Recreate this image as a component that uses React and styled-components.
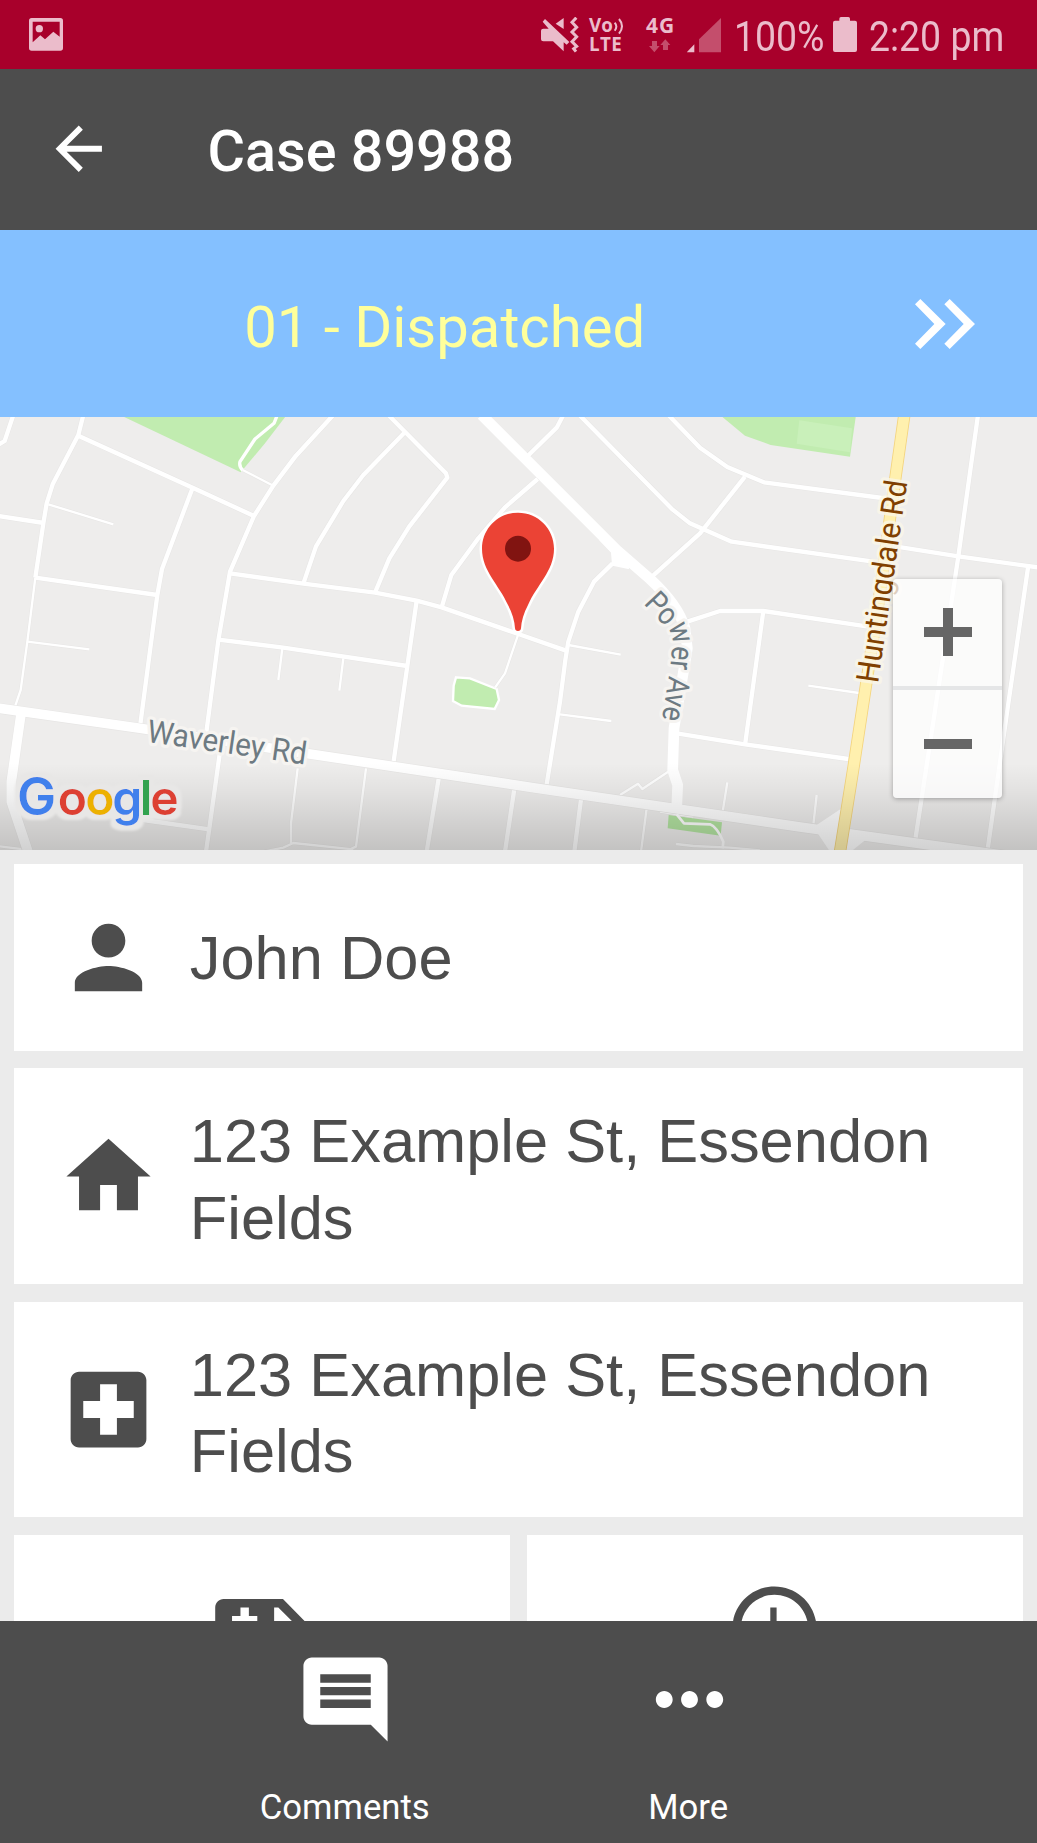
import React from "react";
import styled, { createGlobalStyle } from "styled-components";

const GlobalStyle = createGlobalStyle`
  * { box-sizing: border-box; }
  body { margin: 0; background: #ebebeb; font-family: Roboto, sans-serif; }
`;

const DARK = "#4d4d4d";
const TINT = "#ebbccb";

const Screen = styled.div`
  width: 1037px;
  height: 1843px;
  display: flex;
  flex-direction: column;
  overflow: hidden;
  background: #ebebeb;
`;

/* ---------- status bar ---------- */

const StatusBar = styled.div`
  flex: none;
  height: 69px;
  display: flex;
  align-items: flex-start;
  padding: 0 34px 0 29px;
  background: #a8002b;
  color: ${TINT};
`;

const StatusGlyph = styled.svg`
  flex: none;
  display: block;
  width: ${(p) => p.$w}px;
  height: ${(p) => p.$h}px;
  margin: ${(p) => p.$top}px 0 0 ${(p) => p.$left || 0}px;
`;

const StatusEnd = styled.div`
  display: flex;
  align-items: flex-start;
  margin-left: auto;
`;

const StatusText = styled.div`
  width: ${(p) => p.$w}px;
  margin-left: ${(p) => p.$left}px;
  margin-top: 6px;
  font-size: 43px;
  line-height: 60px;
  white-space: nowrap;
  span {
    display: inline-block;
    transform: scaleX(0.87);
    transform-origin: left center;
  }
`;

const NetBadge = styled.div`
  display: flex;
  flex-direction: column;
  width: ${(p) => p.$w}px;
  margin-left: ${(p) => p.$left}px;
  padding-top: 16px;
  font-family: "Open Sans", sans-serif;
  font-weight: 700;
  font-size: ${(p) => p.$size}px;
  line-height: 19.4px;
  letter-spacing: ${(p) => p.$track || 0}px;
  white-space: nowrap;
`;

const VoLine = styled.div`
  display: flex;
  align-items: flex-start;
  letter-spacing: 0;
`;

/* ---------- header ---------- */

const Header = styled.header`
  flex: none;
  height: 161px;
  display: flex;
  align-items: center;
  padding: 0 0 2px 44px;
  background: ${DARK};
  color: #fff;
`;

const Title = styled.h1`
  margin: 0 0 0 94px;
  padding-top: 7px;
  font-size: 57.5px;
  line-height: 68px;
  font-weight: 500;
`;

const StageBar = styled.div`
  flex: none;
  height: 187px;
  display: flex;
  align-items: center;
  padding-right: 62.2px;
  background: #84c0ff;
`;

const StageName = styled.div`
  flex: 1;
  padding: 6.5px 0 0 0;
  margin-right: 25.5px;
  text-align: center;
  color: #ffff9b;
  font-size: 58px;
  line-height: 68px;
`;

/* ---------- map ---------- */

const MapPanel = styled.section`
  flex: none;
  position: relative;
  height: 432.5px;
  overflow: hidden;
  background: #eeedec;
`;

const MapCanvas = styled.svg`
  display: block;
  width: 1037px;
  height: 433px;
`;

const ZoomControl = styled.div`
  position: absolute;
  right: 34.7px;
  top: 161.6px;
  width: 109.3px;
  height: 219.3px;
  display: flex;
  flex-direction: column;
  border-radius: 4px;
  background: rgba(255, 255, 255, 0.75);
  box-shadow: 0 1px 5px rgba(0, 0, 0, 0.3);
`;

const ZoomButton = styled.button`
  flex: 1;
  display: flex;
  align-items: center;
  justify-content: center;
  border: 0;
  padding: 0;
  background: none;
  & + & { border-top: 4px solid #e5e6e7; }
`;

/* ---------- detail cards ---------- */

const Details = styled.main`
  flex: 1;
  min-height: 0;
  overflow: hidden;
  display: flex;
  flex-direction: column;
  gap: 17.4px;
  padding: 14.5px 14.4px 0;
`;

const Card = styled.div`
  flex: none;
  height: ${(p) => p.$h}px;
  display: flex;
  align-items: center;
  padding: 0 40px 0 43.5px;
  background: #fff;
  color: ${DARK};
`;

const CardText = styled.div`
  margin-left: 30.9px;
  padding-top: ${(p) => (p.$multi ? 7.8 : 1.4)}px;
  font-family: "Liberation Sans", Arial, sans-serif;
  font-size: 61.4px;
  line-height: 76.7px;
`;

const TileRow = styled.div`
  flex: none;
  display: grid;
  grid-template-columns: 1fr 1fr;
  gap: 17px;
`;

const Tile = styled.div`
  height: 187px;
  display: flex;
  justify-content: center;
  padding: 43.4px 1.5px 0 0;
  background: #fff;
  color: ${DARK};
`;

/* ---------- bottom navigation ---------- */

const BottomNav = styled.nav`
  flex: none;
  height: 222.5px;
  display: flex;
  padding-left: 173px;
  background: ${DARK};
`;

const NavButton = styled.button`
  width: 343.5px;
  display: flex;
  flex-direction: column;
  align-items: center;
  border: 0;
  padding: 28px 0 0;
  background: none;
  color: #fff;
  font-family: Roboto, sans-serif;
  font-size: 34.7px;
  line-height: 40px;
  svg { margin-left: 2px; }
`;

const NavLabel = styled.span`
  margin-top: 37.6px;
`;

const IconSvg = styled.svg`
  flex: none;
  display: block;
  width: ${(p) => p.$size}px;
  height: ${(p) => p.$size}px;
  fill: currentColor;
`;

const Icon = ({ d, size = 101 }) => (
  <IconSvg viewBox="0 0 24 24" $size={size} aria-hidden="true">
    <path fillRule="evenodd" d={d} />
  </IconSvg>
);

const PATHS = {
  back: "M20 11H7.83l5.59-5.59L12 4l-8 8 8 8 1.41-1.41L7.83 13H20v-2z",
  person:
    "M12 12c2.21 0 4-1.79 4-4s-1.79-4-4-4-4 1.79-4 4 1.79 4 4 4zm0 2c-2.67 0-8 1.34-8 4v2h16v-2c0-2.66-5.33-4-8-4z",
  home: "M10 20v-6h4v6h5v-8h3L12 3 2 12h3v8z",
  hospital:
    "M19 3H5c-1.1 0-1.99.9-1.99 2L3 19c0 1.1.9 2 2 2h14c1.1 0 2-.9 2-2V5c0-1.1-.9-2-2-2zm-1 11h-4v4h-4v-4H6v-4h4V6h4v4h4v4z",
  ambulance:
    "M3 5H17.1L23 11V17H1V7C1 5.9 1.9 5 3 5zM7 7v2h-2v2h2v2h2v-2h2V9h-2V7zM15 7v4h5l-4-4z",
  clock:
    "M11.99 2C6.47 2 2 6.48 2 12s4.47 10 9.99 10C17.52 22 22 17.52 22 12S17.52 2 11.99 2zM12 20c-4.42 0-8-3.58-8-8s3.58-8 8-8 8 3.58 8 8-3.58 8-8 8zM12.5 7H11v6l5.25 3.15.75-1.23-4.5-2.67z",
  comment:
    "M21.99 4c0-1.1-.89-2-1.99-2H4c-1.1 0-2 .9-2 2v12c0 1.1.9 2 2 2h14l4 4-.01-18zM18 14H6v-2h12v2zm0-3H6V9h12v2zm0-3H6V6h12v2z",
  more: "M6 10c-1.1 0-2 .9-2 2s.9 2 2 2 2-.9 2-2-.9-2-2-2zm12 0c-1.1 0-2 .9-2 2s.9 2 2 2 2-.9 2-2-.9-2-2-2zm-6 0c-1.1 0-2 .9-2 2s.9 2 2 2 2-.9 2-2-.9-2-2-2z",
};

/* Street centre lines, grouped by stroke width in map units. */
const STREETS = [
  [13, [
    "M40 0L14 78L-10 92",
    "M250 0L235 60L158 208L140 265L130 325L106 488",
    "M235 62L578 218L762 303",
    "M1000 0L888 122L820 212L762 303L690 470L655 676L618 960",
    "M578 218L486 462L472 540L420 935",
    "M-10 302L132 324",
    "M106 488L472 540",
    "M690 475L910 506L1125 533L1250 557L1325 577L1555 657L1698 707",
    "M655 674L850 698L1222 753",
    "M1216 50L1090 180L1030 258L948 394L910 506",
    "M1165 0L1338 175L1342 188L1228 334L1168 430L1125 533",
    "M1250 557L1222 753L1180 1045",
    "M1613 192L1515 277L1435 370L1354 480L1325 577",
    "M1690 0L1670 38L1580 126",
    "M1738 0L2018 284L2070 325L2195 380L2620 440",
    "M2005 0L2100 98L2182 156L2292 202L2670 252",
    "M1950 490L2100 355L2235 185",
    "M1838 445L1782 500L1735 590L1705 680L1696 735L1680 860L1640 1108",
    "M2055 622L2160 588L2290 588L2600 634",
    "M2290 588L2235 990",
    "M2035 956L2235 988L2545 1032",
    "M2690 395L2875 424L3120 458",
    "M2934 0L2875 424L2800 920L2745 1280",
    "M3084 458L3020 900L2962 1310",
    "M660 1010L628 1240L618 1310",
    "M430 1215L628 1243",
    "M1317 1085L1280 1310",
    "M1544 1115L1515 1310",
    "M1744 1145L1723 1310",
  ]],
  [7, [
    "M145 268L340 328",
    "M106 488L82 680L62 825L45 875",
    "M82 680L268 703",
    "M847 700L835 795",
    "M1030 730L1018 827",
    "M728 165L820 212",
    "M893 1060L873 1225L873 1285",
    "M790 1310L850 1298L880 1284L1060 1303",
    "M1098 1060L1068 1295L1050 1303",
    "M1555 657L1515 775L1485 818",
    "M1705 690L1862 719",
    "M1680 898L1834 918",
    "M1860 1140L1914 1106L1927 1122L2008 1068",
    "M1940 1180L1923 1310",
    "M1980 1190L2080 1205",
    "M2425 812L2577 834",
    "M2182 1102L2168 1190",
    "M2450 1140L2440 1230",
    "M2028 1287L2080 1293L2190 1298L2280 1306",
    "M-10 1293L80 1304",
  ]],
];

const GOOGLE = [
  ["G", 51, "#4080ec", 157],
  ["o", 173, "#dd4033", 144],
  ["o", 256, "#ecb100", 144],
  ["g", 337, "#4080ec", 144],
  ["l", 419, "#33a350", 144],
  ["e", 451, "#dd4033", 144],
];

const StreetMap = () => (
  <MapCanvas viewBox="0 6 3111 1299">
    <defs>
      <linearGradient id="shade" x1="0" y1="0" x2="0" y2="1">
        <stop offset="0" stopColor="#000" stopOpacity="0" />
        <stop offset="0.3" stopColor="#000" stopOpacity="0.045" />
        <stop offset="1" stopColor="#000" stopOpacity="0.18" />
      </linearGradient>
      <filter id="halo" x="-10%" y="-20%" width="120%" height="140%">
        <feMorphology in="SourceAlpha" operator="dilate" radius="14" result="grown" />
        <feGaussianBlur in="grown" stdDeviation="3" result="soft" />
        <feFlood floodColor="#e8e7e6" />
        <feComposite in2="soft" operator="in" result="edge" />
        <feMerge>
          <feMergeNode in="edge" />
          <feMergeNode in="SourceGraphic" />
        </feMerge>
      </filter>
      <path id="powerAve" d="M1930 566L2005 645Q2019 660 2017 692L2012 750L1978 960" />
    </defs>

    <g fill="#c1ecb0">
      <path d="M360 0H860L795 85L722 172Z" />
      <path d="M2160 0H2568L2550 125L2312 90L2235 62Z" />
      <path d="M1368 787L1410 790L1490 822L1497 855L1484 882L1385 872L1359 858L1361 812Z" stroke="#fff" strokeWidth="7" />
      <path d="M2006 1200L2166 1222L2162 1262L2003 1240Z" fill="#b3e3a1" />
    </g>
    <path d="M2398 16L2556 40L2550 112L2390 86Z" fill="#c9f0ba" />

    <g fill="none" strokeLinejoin="round">
      <path d="M832 0L822 25L765 72L720 140Q716 155 730 167" stroke="#fff" strokeWidth="10" />
      {STREETS.map(([w, lines]) =>
        lines.map((d) => <path key={`c${d}`} d={d} stroke="#e7e6e5" strokeWidth={w + 3} />)
      )}
      {STREETS.map(([w, lines]) =>
        lines.map((d) => <path key={d} d={d} stroke="#fff" strokeWidth={w} />)
      )}
      <g stroke="#e7e6e5">
        <path d="M-10 879L420 940L1050 1035L1600 1118L2400 1236L3120 1336" strokeWidth="33" />
        <path d="M64 890L34 1100L34 1160L84 1310" strokeWidth="32" />
      </g>
      <g stroke="#fff">
        <path d="M-10 879L420 940L1050 1035L1600 1118L2400 1236L3120 1336" strokeWidth="29" />
        <path d="M64 890L34 1100L34 1160L84 1310" strokeWidth="29" />
        <path d="M1445 0L1580 135L1850 405L1950 492Q2035 570 2055 640L2062 700L2022 940L2018 1065L2033 1110L2030 1180" strokeWidth="32" />
        <path d="M1800 375L1835 412L1838 450L1885 460L1880 425Z" fill="#fff" strokeWidth="4" />
        <path d="M2030 1198L2052 1225L2130 1228Q2150 1235 2170 1280L2168 1300" strokeWidth="8" />
      </g>
      <path d="M2450 1230L2525 1180L2550 1245L2600 1272L2540 1320L2490 1310L2455 1258Z" fill="#fff" />
      <path d="M2713 0L2686 190L2636 560L2560 1060L2520 1310" stroke="#f4d47d" strokeWidth="37" />
      <path d="M2713 0L2686 190L2636 560L2560 1060L2520 1310" stroke="#fff0ae" strokeWidth="32" />
    </g>

    <g
      fontFamily="Roboto, sans-serif"
      fontSize="95"
      stroke="#f6f4f1"
      strokeWidth="20"
      strokeLinejoin="round"
      paintOrder="stroke"
    >
      <text transform="translate(438 980) rotate(8.2)" textLength="482" lengthAdjust="spacingAndGlyphs" fill="#6d7a82">
        Waverley Rd
      </text>
      <text fill="#6d7a82" fontSize="93">
        <textPath href="#powerAve" textLength="382" lengthAdjust="spacingAndGlyphs">Power Ave</textPath>
      </text>
      <text
        transform="translate(2634 806) rotate(-81.7)"
        textLength="612"
        lengthAdjust="spacingAndGlyphs"
        fill="#804000"
        stroke="#fbf7e8"
        strokeOpacity="0.75"
      >
        Huntingdale Rd
      </text>
    </g>

    <path
      d="M1554 293C1494 293 1446 341 1446 401C1446 468 1498 510 1524 570Q1543 606 1545 640Q1546 648 1554 648Q1562 648 1563 640Q1565 606 1584 570C1610 510 1662 468 1662 401C1662 341 1614 293 1554 293Z"
      fill="#eb4335"
      stroke="#fff"
      strokeWidth="15"
      paintOrder="stroke"
    />
    <circle cx="1554" cy="401" r="39" fill="#811411" />

    <rect x="0" y="1045" width="3111" height="260" fill="url(#shade)" />

    <g fontFamily="Inter, sans-serif" fontWeight="600" filter="url(#halo)">
      <text y="1200">
        {GOOGLE.map(([ch, x, fill, size]) => (
          <tspan key={x} x={x} fill={fill} fontSize={size}>{ch}</tspan>
        ))}
      </text>
    </g>
  </MapCanvas>
);

export default function App() {
  return (
    <>
      <GlobalStyle />
      <Screen>
        <StatusBar>
          <StatusGlyph $w={34} $h={33} $top={18} viewBox="0 0 102 99">
            <path
              fill={TINT}
              fillRule="evenodd"
              d="M8 0H94Q102 0 102 8V90Q102 98 94 98H8Q0 98 0 90V8Q0 0 8 0ZM11 11V73L34 52L48 64L73 41L92 56V11Z"
            />
            <circle cx="31" cy="32" r="11" fill={TINT} />
          </StatusGlyph>
          <StatusEnd>
            <StatusGlyph $w={39} $h={37} $top={17} viewBox="66 51 117 111">
              <path fill={TINT} d="M69 92Q69 86 76 86H92L74 65L81 57L154 126L146 134L137 127V154L105 124H76Q69 124 69 118ZM137 54V87L113 71Z" />
              <path d="M175 53L162 67L176 82L162 96L176 110L162 125L176 139L167 146L174 155" fill="none" stroke={TINT} strokeWidth="9" />
            </StatusGlyph>
            <NetBadge $left={10} $w={37.5} $size={18.8} $track={0.4}>
              <VoLine>
                Vo
                <StatusGlyph $w={11} $h={17} $top={2} $left={1} viewBox="0 0 33 51">
                  <path d="M2 14Q12 25 2 38M15 3Q33 24 15 47" fill="none" stroke={TINT} strokeWidth="6" />
                </StatusGlyph>
              </VoLine>
              LTE
            </NetBadge>
            <NetBadge $left={19.5} $w={28} $size={21} $track={1}>
              4G
              <StatusGlyph $w={22} $h={14} $top={4} $left={3} viewBox="394 117 66 42">
                <path fill="#c44e6c" d="M403 123H418V138H426L410 157L394 138H403ZM436 150V135H428L443 118L458 135H451V150Z" />
              </StatusGlyph>
            </NetBadge>
            <StatusGlyph $w={35} $h={35} $top={18} $left={13} viewBox="510 54 105 105">
              <path fill={TINT} d="M509 157L532 133V157Z" />
              <path fill="#c44e6c" d="M546 157V118L612 54V157Z" />
            </StatusGlyph>
            <StatusText $w={92} $left={12}><span>100%</span></StatusText>
            <StatusGlyph $w={24} $h={35} $top={17} $left={7} viewBox="948 51 72 105">
              <path fill={TINT} d="M967 56Q967 51 972 51H994Q999 51 999 56V62H1014Q1020 62 1020 68V150Q1020 156 1014 156H954Q948 156 948 150V68Q948 62 954 62H967Z" />
            </StatusGlyph>
            <StatusText $w={134} $left={12}><span>2:20 pm</span></StatusText>
          </StatusEnd>
        </StatusBar>

        <Header>
          <Icon d={PATHS.back} size={69.5} />
          <Title>Case 89988</Title>
        </Header>

        <StageBar>
          <StageName>01 - Dispatched</StageName>
          <svg width="60" height="50" viewBox="1192 897 180 150">
            <path
              fill="#fff"
              d="M1208 897L1192 913L1250 972L1192 1031L1208 1047L1284 972ZM1296 897L1280 913L1338 972L1280 1031L1296 1047L1372 972Z"
            />
          </svg>
        </StageBar>

        <MapPanel>
          <StreetMap />
          <ZoomControl>
            <ZoomButton aria-label="Zoom in">
              <svg width="48" height="48" viewBox="0 0 48 48">
                <path d="M19 0H29V19H48V29H29V48H19V29H0V19H19Z" fill="#666" />
              </svg>
            </ZoomButton>
            <ZoomButton aria-label="Zoom out">
              <svg width="48" height="10" viewBox="0 0 48 10">
                <path d="M0 0H48V10H0Z" fill="#666" />
              </svg>
            </ZoomButton>
          </ZoomControl>
        </MapPanel>

        <Details>
          <Card $h={187}>
            <Icon d={PATHS.person} />
            <CardText>John Doe</CardText>
          </Card>
          <Card $h={215.8}>
            <Icon d={PATHS.home} />
            <CardText $multi>123 Example St, Essendon Fields</CardText>
          </Card>
          <Card $h={215.8}>
            <Icon d={PATHS.hospital} />
            <CardText $multi>123 Example St, Essendon Fields</CardText>
          </Card>
          <TileRow>
            <Tile><Icon d={PATHS.ambulance} /></Tile>
            <Tile><Icon d={PATHS.clock} /></Tile>
          </TileRow>
        </Details>

        <BottomNav>
          <NavButton>
            <Icon d={PATHS.comment} />
            <NavLabel>Comments</NavLabel>
          </NavButton>
          <NavButton>
            <Icon d={PATHS.more} />
            <NavLabel>More</NavLabel>
          </NavButton>
        </BottomNav>
      </Screen>
    </>
  );
}
